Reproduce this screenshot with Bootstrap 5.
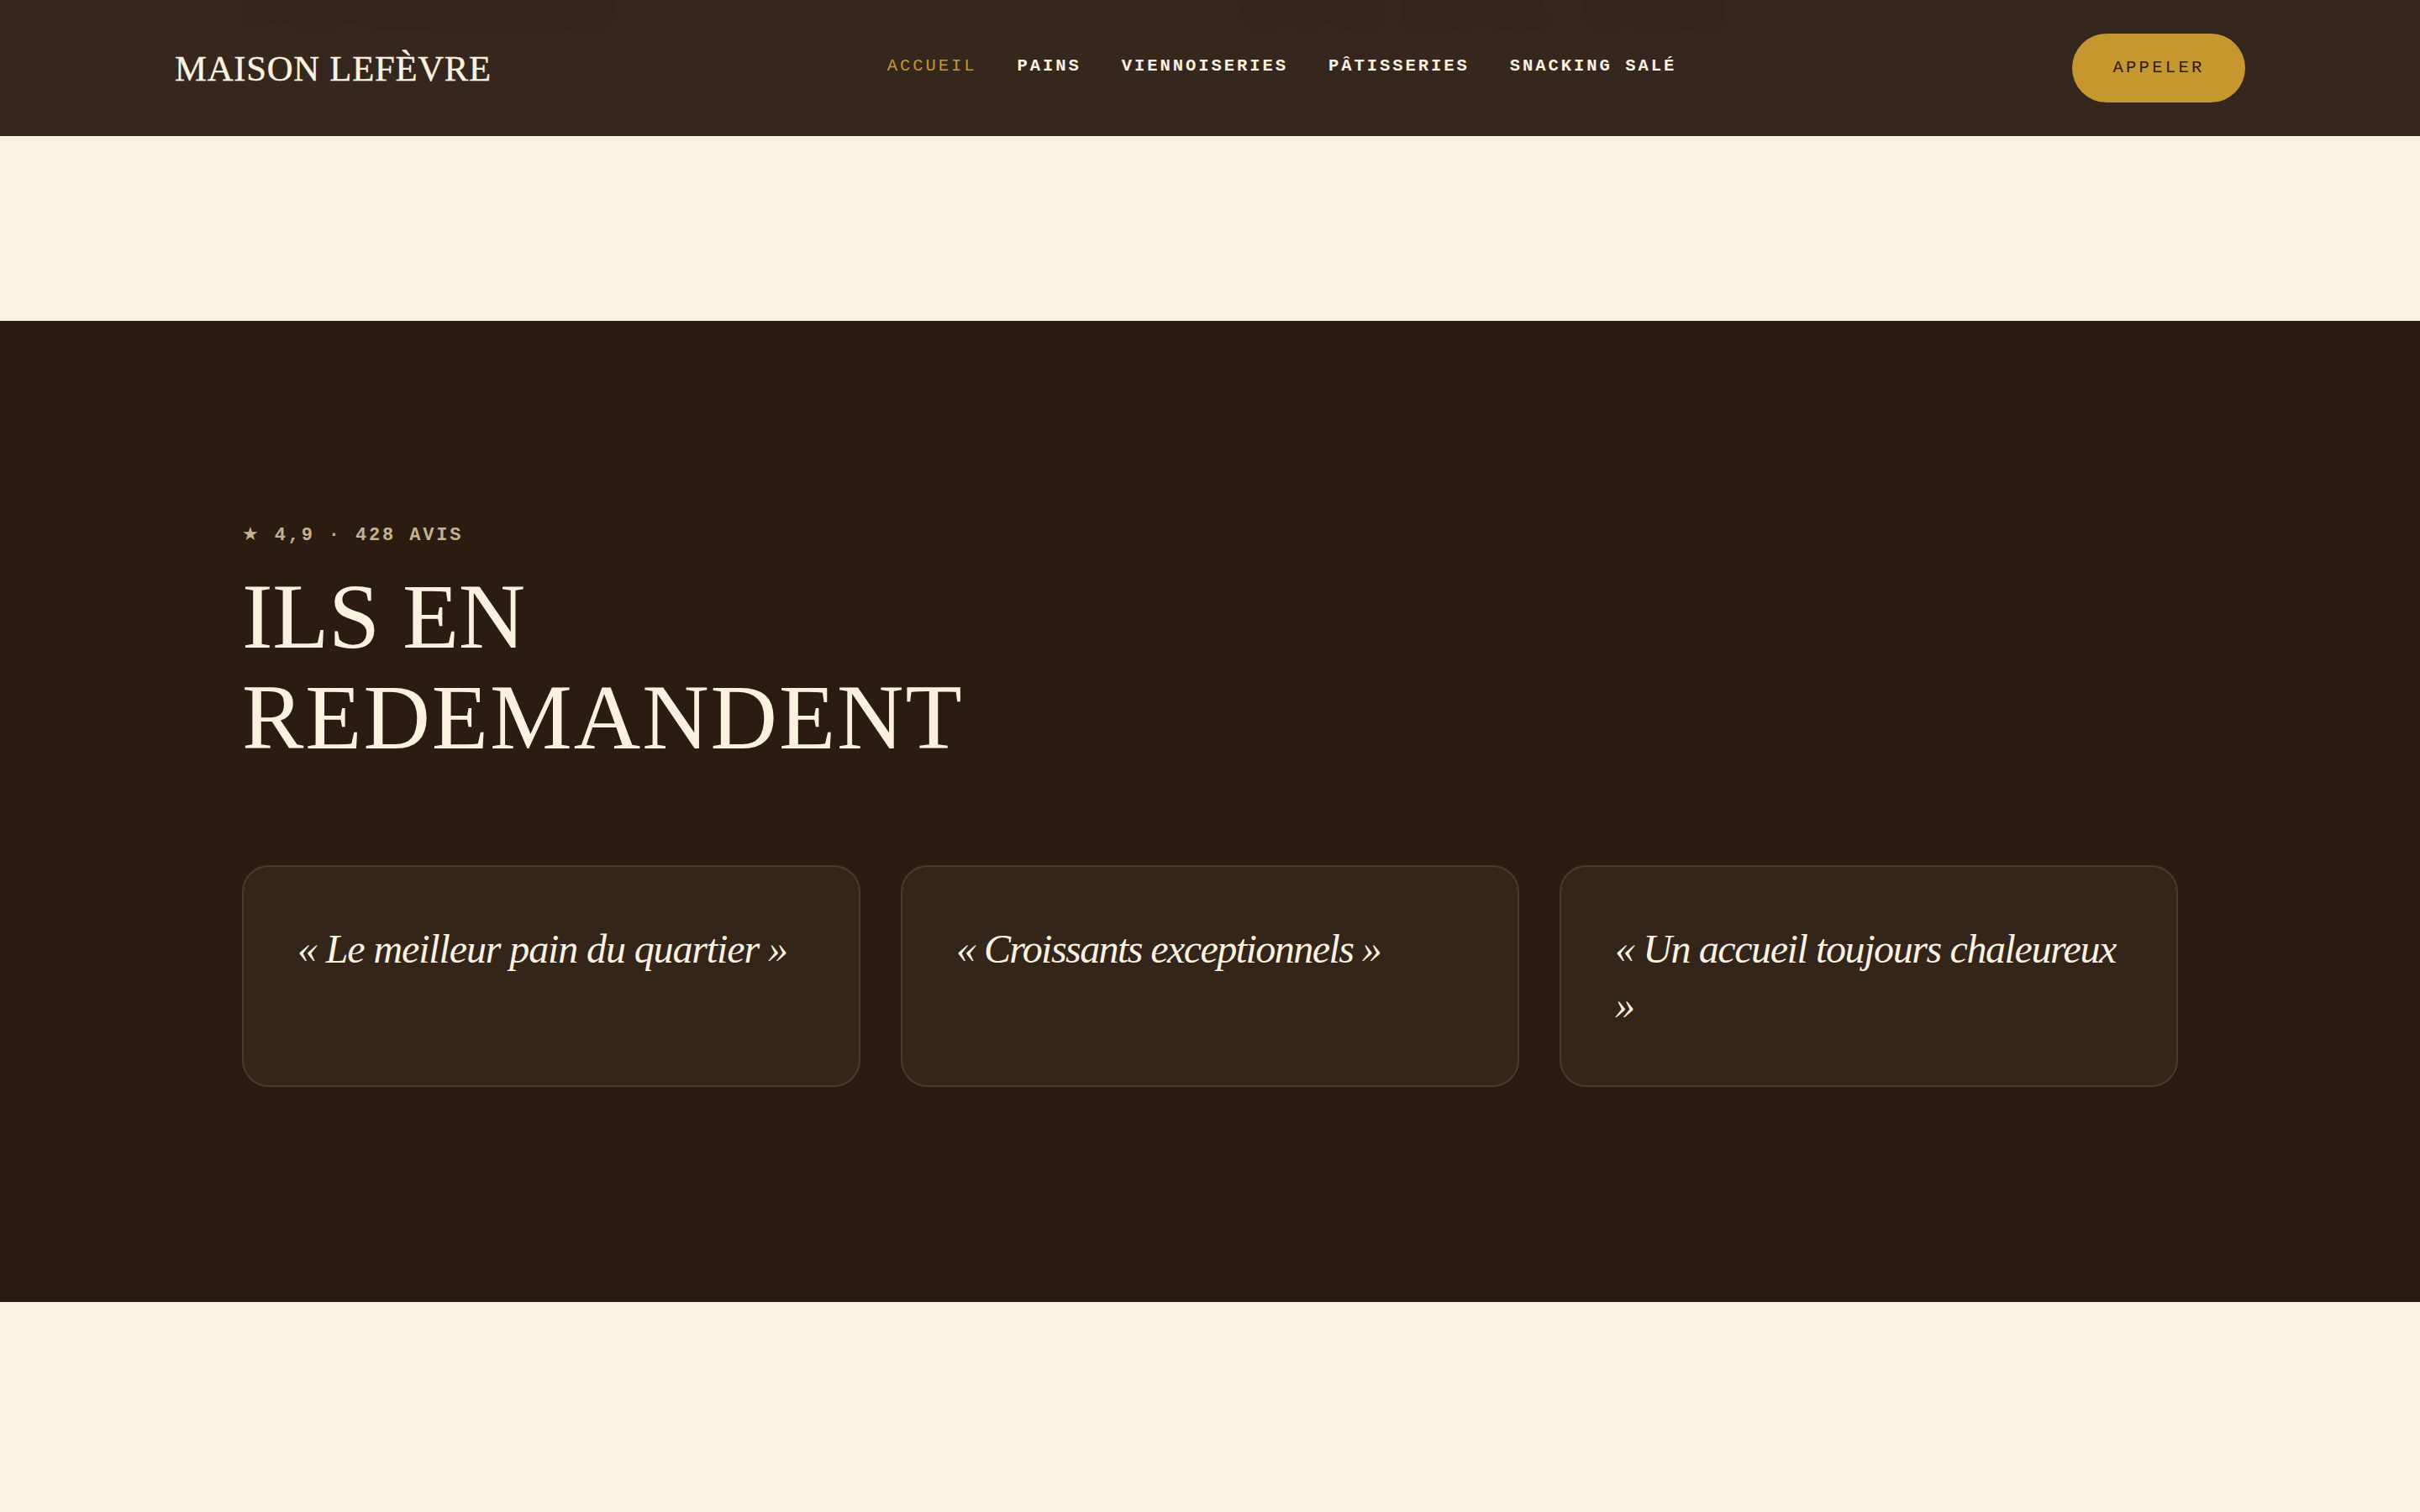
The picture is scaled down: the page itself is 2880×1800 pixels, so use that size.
<!DOCTYPE html>
<html lang="fr">
<head>
    <meta charset="UTF-8">
    <meta name="viewport" content="width=device-width, initial-scale=1.0">
    <title>Maison Lefèvre</title>
    <!-- Bootstrap CSS -->
    <link href="https://cdn.jsdelivr.net/npm/bootstrap@5.3.0/dist/css/bootstrap.min.css" rel="stylesheet">
    <style>
        :root {
            --creme: #faf2e0;
            --cacao: #2a1c13;
            --or: #c6962f;
        }
        body {
            background: var(--creme);
            color: var(--creme);
            font-family: "Liberation Serif", serif;
            overflow: hidden;
        }
        .topbar {
            height: 162px;
            padding: 0 208px;
            background: #35271d;
        }
        .ombres {
            z-index: -1;
        }
        .marque {
            padding-top: 2px;
            font-size: 42.7px;
            line-height: 1;
            letter-spacing: 0.75px;
            color: var(--creme);
            -webkit-text-stroke: 0.4px var(--creme);
        }
        .mono {
            font-family: "Liberation Mono", monospace;
            font-size: 20.5px;
            line-height: 30px;
            letter-spacing: 2.95px;
        }
        .menu {
            gap: 48px;
            padding-bottom: 4px;
        }
        .menu .nav-link {
            color: var(--creme);
            font-weight: 700;
        }
        .menu .nav-link.active {
            color: var(--or);
            font-weight: 400;
        }
        .appeler {
            width: 206px;
            height: 82px;
            letter-spacing: 3.3px;
            background: var(--or);
            color: var(--cacao);
        }
        main {
            padding-top: 382px;
        }
        .avis {
            height: 1168px;
            padding: 241px 288px 0;
            background: var(--cacao);
        }
        .note {
            height: 30px;
            font-size: 22px;
            font-weight: 700;
            letter-spacing: 2.85px;
            color: #c5b190;
        }
        .etoile {
            font-family: "DejaVu Sans", sans-serif;
            font-weight: 400;
            line-height: 1;
        }
        .titre {
            margin: 21px 0 116px;
            font-size: 110px;
            line-height: 120px;
            letter-spacing: 1.95px;
        }
        .titre span {
            letter-spacing: -0.4px;
        }
        .carte {
            height: 264px;
            padding: 64px;
            border: 2px solid #4b3929;
            border-radius: 32px;
            background: #34251b;
        }
        .citation {
            font-size: 48px;
            line-height: 67.2px;
            letter-spacing: -1.12px;
        }
        .serre {
            letter-spacing: -1.56px;
        }
        .mi-serre {
            letter-spacing: -1.4px;
        }
    </style>
</head>
<body>
    <!-- Navigation -->
    <nav class="topbar fixed-top d-flex align-items-center justify-content-between">
        <!-- Titre de la section précédente, à peine visible derrière la barre -->
        <svg class="ombres position-absolute top-0 start-0" width="2880" height="50" fill="#33251b" aria-hidden="true">
            <path d="M288 0H732C732 18 728 33 714 33C690 30 670 40 640 38C560 40 500 36 450 35C430 30 420 26 405 30C380 36 355 34 340 28C325 22 315 32 300 32C291 28 288 15 288 0Z"/>
            <path d="M1473 0H1647C1647 20 1646 37 1622 38C1600 37 1588 26 1576 27C1566 32 1556 36 1546 32C1530 28 1520 30 1510 34C1485 38 1475 20 1473 0Z"/>
            <path d="M1668 0H1835C1836 12 1842 20 1842 29C1836 34 1820 38 1800 37C1780 34 1765 27 1748 32C1730 38 1710 40 1690 39C1666 34 1668 20 1668 0Z"/>
            <path d="M1883 0H2052C2052 18 2052 32 2036 38C2022 40 2014 33 2004 35C1990 40 1975 40 1960 36C1945 30 1935 26 1922 33C1895 38 1884 20 1883 0Z"/>
        </svg>
        <a class="marque text-decoration-none" href="#">MAISON LEFÈVRE</a>
        <div class="menu nav mono">
            <a class="nav-link p-0 active" href="#">ACCUEIL</a>
            <a class="nav-link p-0" href="#">PAINS</a>
            <a class="nav-link p-0" href="#">VIENNOISERIES</a>
            <a class="nav-link p-0" href="#">PÂTISSERIES</a>
            <a class="nav-link p-0" href="#">SNACKING SALÉ</a>
        </div>
        <a class="appeler mono rounded-pill text-decoration-none d-flex align-items-center justify-content-center" href="#">APPELER</a>
    </nav>

    <main>
        <!-- Avis -->
        <section class="avis">
            <p class="mono note mb-0"><span class="etoile">★</span> 4,9 · 428 AVIS</p>
            <h2 class="titre fw-normal"><span>ILS EN</span><br>REDEMANDENT</h2>
            <div class="row gx-5">
                <div class="col-4">
                    <div class="carte">
                        <p class="citation fst-italic mb-0">« Le meilleur pain du quartier »</p>
                    </div>
                </div>
                <div class="col-4">
                    <div class="carte">
                        <p class="citation serre fst-italic mb-0">« Croissants exceptionnels »</p>
                    </div>
                </div>
                <div class="col-4">
                    <div class="carte">
                        <p class="citation mi-serre fst-italic mb-0">« Un accueil toujours chaleureux »</p>
                    </div>
                </div>
            </div>
        </section>
    </main>

    <!-- Bootstrap JS -->
    <script src="https://cdn.jsdelivr.net/npm/bootstrap@5.3.0/dist/js/bootstrap.bundle.min.js"></script>
</body>
</html>
